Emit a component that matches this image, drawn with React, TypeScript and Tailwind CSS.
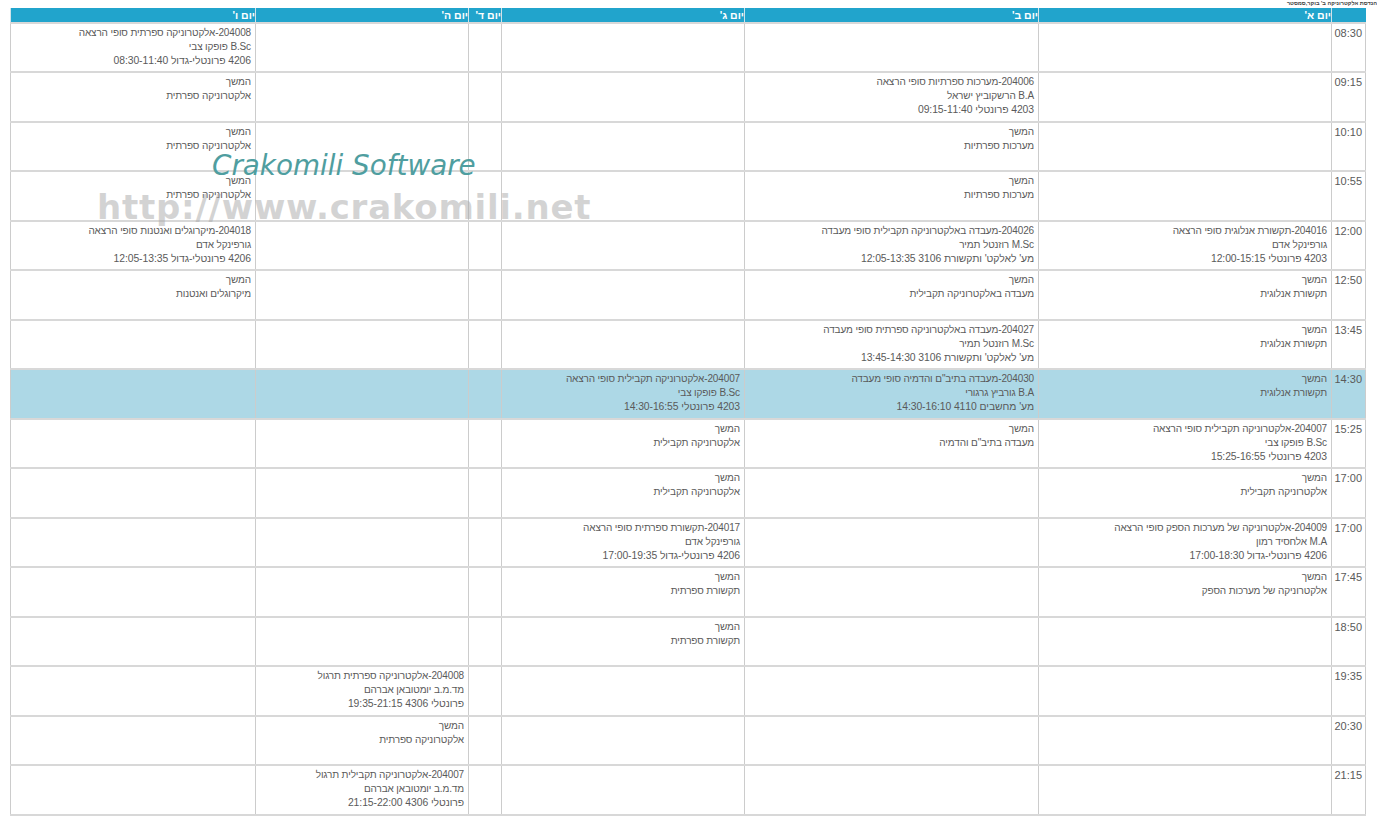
const DAYS = ["יום א'", "יום ב'", "יום ג'", "יום ד'", "יום ה'", "יום ו'"];

type Row = { time: string; cells: string[][]; active?: boolean };

const cont = (name: string) => ["המשך", name];

const rows: Row[] = [
  { time: "08:30", cells: [[], [], [], [], [], ["204008-אלקטרוניקה ספרתית סופי הרצאה", "B.Sc פופקו צבי", "4206 פרונטלי-גדול 08:30-11:40"]] },
  { time: "09:15", cells: [[], ["204006-מערכות ספרתיות סופי הרצאה", "B.A הרשקוביץ ישראל", "4203 פרונטלי 09:15-11:40"], [], [], [], cont("אלקטרוניקה ספרתית")] },
  { time: "10:10", cells: [[], cont("מערכות ספרתיות"), [], [], [], cont("אלקטרוניקה ספרתית")] },
  { time: "10:55", cells: [[], cont("מערכות ספרתיות"), [], [], [], cont("אלקטרוניקה ספרתית")] },
  { time: "12:00", cells: [["204016-תקשורת אנלוגית סופי הרצאה", "גורפינקל אדם", "4203 פרונטלי 12:00-15:15"], ["204026-מעבדה באלקטרוניקה תקבילית סופי מעבדה", "M.Sc רוזנטל תמיר", "מע' לאלקט' ותקשורת 3106 12:05-13:35"], [], [], [], ["204018-מיקרוגלים ואנטנות סופי הרצאה", "גורפינקל אדם", "4206 פרונטלי-גדול 12:05-13:35"]] },
  { time: "12:50", cells: [cont("תקשורת אנלוגית"), cont("מעבדה באלקטרוניקה תקבילית"), [], [], [], cont("מיקרוגלים ואנטנות")] },
  { time: "13:45", cells: [cont("תקשורת אנלוגית"), ["204027-מעבדה באלקטרוניקה ספרתית סופי מעבדה", "M.Sc רוזנטל תמיר", "מע' לאלקט' ותקשורת 3106 13:45-14:30"], [], [], [], []] },
  { time: "14:30", active: true, cells: [cont("תקשורת אנלוגית"), ["204030-מעבדה בתיב\"ם והדמיה סופי מעבדה", "B.A גורביץ גרגורי", "מע' מחשבים 4110 14:30-16:10"], ["204007-אלקטרוניקה תקבילית סופי הרצאה", "B.Sc פופקו צבי", "4203 פרונטלי 14:30-16:55"], [], [], []] },
  { time: "15:25", cells: [["204007-אלקטרוניקה תקבילית סופי הרצאה", "B.Sc פופקו צבי", "4203 פרונטלי 15:25-16:55"], cont("מעבדה בתיב\"ם והדמיה"), cont("אלקטרוניקה תקבילית"), [], [], []] },
  { time: "17:00", cells: [cont("אלקטרוניקה תקבילית"), [], cont("אלקטרוניקה תקבילית"), [], [], []] },
  { time: "17:00", cells: [["204009-אלקטרוניקה של מערכות הספק סופי הרצאה", "M.A אלחסיד רמון", "4206 פרונטלי-גדול 17:00-18:30"], [], ["204017-תקשורת ספרתית סופי הרצאה", "גורפינקל אדם", "4206 פרונטלי-גדול 17:00-19:35"], [], [], []] },
  { time: "17:45", cells: [cont("אלקטרוניקה של מערכות הספק"), [], cont("תקשורת ספרתית"), [], [], []] },
  { time: "18:50", cells: [[], [], cont("תקשורת ספרתית"), [], [], []] },
  { time: "19:35", cells: [[], [], [], [], ["204008-אלקטרוניקה ספרתית תרגול", "מד.מ.ב יומטובאן אברהם", "פרונטלי 4306 19:35-21:15"], []] },
  { time: "20:30", cells: [[], [], [], [], cont("אלקטרוניקה ספרתית"), []] },
  { time: "21:15", cells: [[], [], [], [], ["204007-אלקטרוניקה תקבילית תרגול", "מד.מ.ב יומטובאן אברהם", "פרונטלי 4306 21:15-22:00"], []] },
];

const colClasses = ["w-[293px]", "w-[294px]", "w-[243px]", "w-[33px]", "w-[213px]", "w-[245px]"];

export default function App() {
  return (
    <div dir="rtl" className="relative w-[1377px] h-[820px] overflow-hidden bg-white font-['Liberation_Sans',Arial,sans-serif] text-[#5a5a5a]">
      <p className="h-[8px] text-[5.6px] leading-[6px] font-bold text-[#444] whitespace-nowrap">
        הנדסת אלקטרוניקה ב' בוקר,סמסטר
      </p>
      <table className="table-fixed border-collapse w-[1355px] mr-[11px] text-[10px] leading-[14px]">
        <colgroup>
          <col className="w-[34px]" />
          {colClasses.map((c) => <col key={c} className={c} />)}
        </colgroup>
        <thead>
          <tr className="h-[14px] bg-[#21a4cc] text-white text-[10.5px] leading-[12px]">
            <th className="border border-[#21a4cc] border-l-[#cfe3ea]" />
            {DAYS.map((d) => (
              <th key={d} className="text-right font-bold border-x border-x-[#cfe3ea] border-y border-y-[#21a4cc] px-0">{d}</th>
            ))}
          </tr>
        </thead>
        <tbody>
          {rows.map((row, i) => (
            <tr key={i} className={row.active ? "h-[49.5px] bg-[#add8e6]" : "h-[49.5px]"}>
              <td className="align-top text-right border-x border-x-[#cccccc] border-y-2 border-y-[#d8d8d8] pt-[2px] pr-[3px] text-[11px]">{row.time}</td>
              {row.cells.map((lines, j) => (
                <td key={j} className="align-top text-right border-x border-x-[#cccccc] border-y-2 border-y-[#d8d8d8] pt-[2px] pr-[4px] whitespace-nowrap overflow-hidden">
                  {lines.map((l, k) => (
                    <div key={k} className={k === 2 ? "text-[10.4px] tracking-[-0.08px]" : "tracking-[-0.13px]"}>{l}</div>
                  ))}
                </td>
              ))}
            </tr>
          ))}
        </tbody>
      </table>
      <div dir="ltr" className="absolute left-[212px] top-[150px] font-['DejaVu_Sans',sans-serif] italic text-[27.8px] leading-[32px] text-[#4f9ea0] whitespace-nowrap">
        Crakomili Software
      </div>
      <div dir="ltr" className="absolute left-[97px] top-[187px] font-['DejaVu_Sans',sans-serif] font-bold text-[34px] leading-[40px] tracking-[0.75px] text-[#a8a8a8]/50 whitespace-nowrap">
        http://www.crakomili.net
      </div>
    </div>
  );
}
